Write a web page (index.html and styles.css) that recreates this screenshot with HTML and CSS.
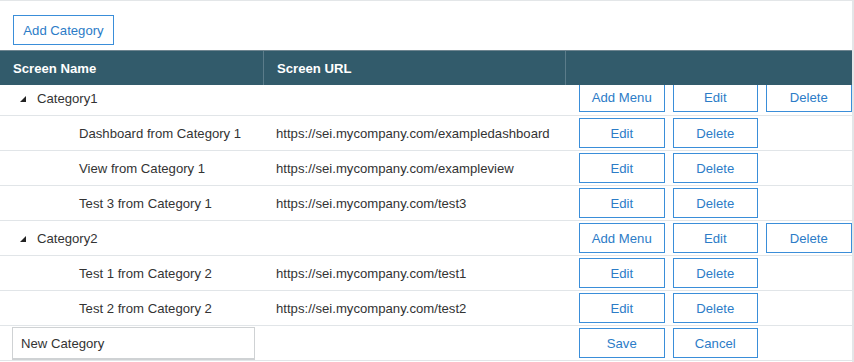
FILE: index.html
```html
<!DOCTYPE html>
<html>
<head>
<meta charset="utf-8">
<link rel="stylesheet" href="styles.css">
</head>
<body>
<div class="page">
  <div class="toolbar"><button class="btn btn-wide">Add Category</button></div>
  <div class="grid">
    <div class="row head">
      <div class="cell c1">Screen Name</div>
      <div class="cell c2">Screen URL</div>
      <div class="cell c3"></div>
    </div>
    <div class="row cat first">
      <div class="cell c1"><span class="tri"></span>Category1</div>
      <div class="cell c2"></div>
      <div class="cell c3"><button class="btn">Add Menu</button><button class="btn">Edit</button><button class="btn">Delete</button></div>
    </div>
    <div class="row">
      <div class="cell c1 child">Dashboard from Category 1</div>
      <div class="cell c2">https://sei.mycompany.com/exampledashboard</div>
      <div class="cell c3"><button class="btn">Edit</button><button class="btn">Delete</button></div>
    </div>
    <div class="row">
      <div class="cell c1 child">View from Category 1</div>
      <div class="cell c2">https://sei.mycompany.com/exampleview</div>
      <div class="cell c3"><button class="btn">Edit</button><button class="btn">Delete</button></div>
    </div>
    <div class="row">
      <div class="cell c1 child">Test 3 from Category 1</div>
      <div class="cell c2">https://sei.mycompany.com/test3</div>
      <div class="cell c3"><button class="btn">Edit</button><button class="btn">Delete</button></div>
    </div>
    <div class="row cat">
      <div class="cell c1"><span class="tri"></span>Category2</div>
      <div class="cell c2"></div>
      <div class="cell c3"><button class="btn">Add Menu</button><button class="btn">Edit</button><button class="btn">Delete</button></div>
    </div>
    <div class="row">
      <div class="cell c1 child">Test 1 from Category 2</div>
      <div class="cell c2">https://sei.mycompany.com/test1</div>
      <div class="cell c3"><button class="btn">Edit</button><button class="btn">Delete</button></div>
    </div>
    <div class="row">
      <div class="cell c1 child">Test 2 from Category 2</div>
      <div class="cell c2">https://sei.mycompany.com/test2</div>
      <div class="cell c3"><button class="btn">Edit</button><button class="btn">Delete</button></div>
    </div>
    <div class="row edit">
      <div class="cell c1"><input class="input" type="text" value="New Category"></div>
      <div class="cell c2"></div>
      <div class="cell c3"><button class="btn">Save</button><button class="btn">Cancel</button></div>
    </div>
  </div>
</div>
</body>
</html>
```

FILE: styles.css
```css
* { box-sizing: border-box; }
html, body { margin: 0; padding: 0; background: #fff; }
body {
  font-family: "Liberation Sans", Arial, sans-serif;
  font-size: 13.15px;
  color: #333;
}
.page {
  width: 854px;
  height: 362px;
  border-top: 1px solid #e3e6e8;
  border-right: 2px solid #e3e6e8;
  overflow: hidden;
}
.toolbar {
  padding: 14px 0 5px 13px;
}
.btn {
  display: inline-flex;
  align-items: center;
  justify-content: center;
  height: 30px;
  width: 85.5px;
  padding: 0;
  margin: 0;
  background: #fff;
  border: 1px solid #3a8ed9;
  border-radius: 0;
  color: #2c7cc7;
  font-family: "Liberation Sans", Arial, sans-serif;
  font-size: 13.15px;
}
.btn-wide { width: 101px; }
.grid { display: flex; flex-direction: column; }
.row {
  display: grid;
  grid-template-columns: 264px 302px 1fr;
  height: 35px;
  border-bottom: 1px solid #e1e5e8;
}
.cell {
  display: flex;
  align-items: center;
  padding-left: 12px;
  white-space: nowrap;
}
.c2 { padding-left: 12px; }
.c3 {
  align-items: flex-start;
  padding: 2px 0 0 13px;
  gap: 8px;
}
.head {
  position: relative;
  z-index: 1;
  background: #325b6b;
  color: #fff;
  font-weight: bold;
  border-top: 1px solid #6f8590;
  border-bottom: none;
}
.head .cell { border-right: 1px solid #5b7c8a; padding-left: 13px; }
.head .c3 { border-right: none; }
.head .c2 { padding-left: 13px; }
.first { margin-top: -4px; }
.first .c3 { padding-top: 1px; }
.tri {
  display: inline-block;
  width: 0;
  height: 0;
  border-left: 6px solid transparent;
  border-bottom: 6px solid #222;
  margin: 1px 11px 0 8px;
}
.child { padding-left: 79px; }
.edit .c1 { align-items: flex-start; padding-top: 1px; }
.input {
  width: 243px;
  height: 33px;
  border: 1px solid #cfd2d4;
  border-bottom-width: 2px;
  padding: 0 8px;
  font-family: "Liberation Sans", Arial, sans-serif;
  font-size: 13.15px;
  color: #333;
  outline: none;
}
```
